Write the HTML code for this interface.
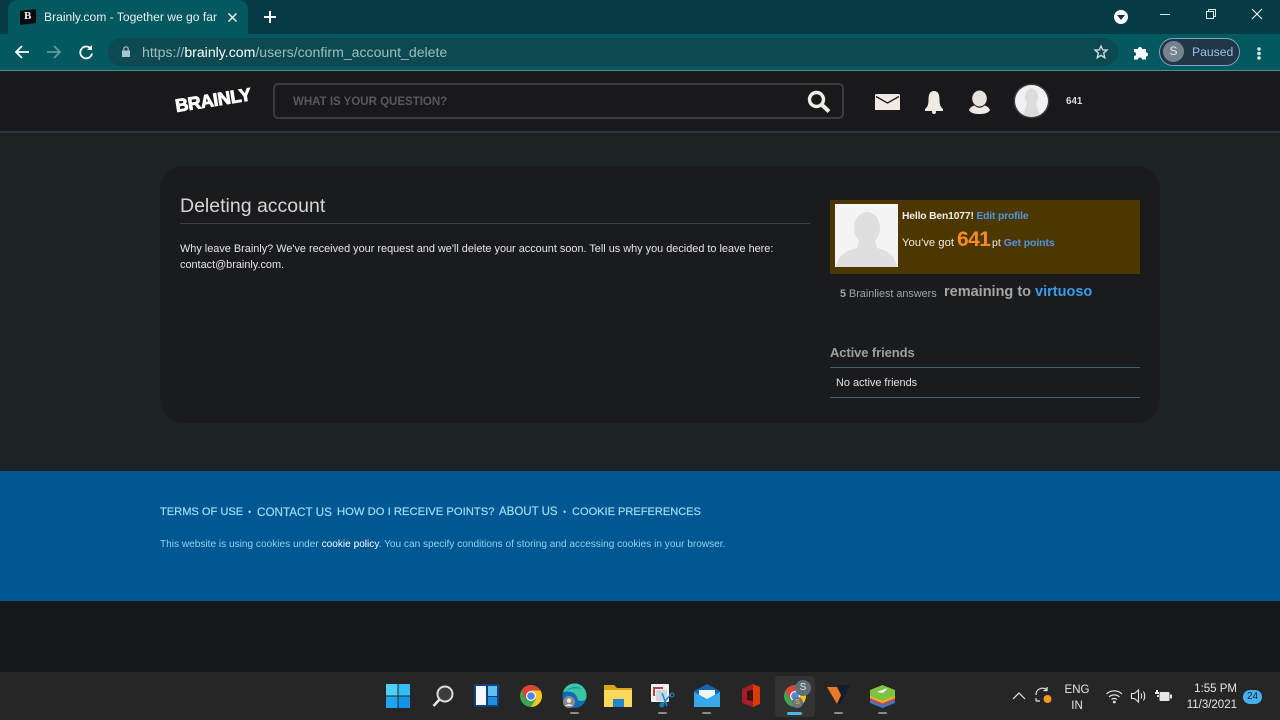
<!DOCTYPE html>
<html><head><meta charset="utf-8"><style>
html,body{margin:0;padding:0;width:1280px;height:720px;overflow:hidden;background:#1a1b1d;font-family:"Liberation Sans",sans-serif}
.a{position:absolute;white-space:nowrap}
svg{position:absolute;overflow:visible}
a{color:inherit;text-decoration:none}
.f{-webkit-text-stroke:.2px #9fdcf5}
</style></head><body>
<!-- title bar -->
<div class="a" style="left:0;top:0;width:1280px;height:34px;background:#053b44"></div>
<div class="a" style="left:0;top:34px;width:1280px;height:36px;background:#04585f"></div>
<div class="a" style="left:0;top:70px;width:1280px;height:1px;background:#4f8f94"></div>
<div class="a" style="left:8px;top:0;width:240px;height:34px;background:#04585f;border-radius:9px 9px 0 0"></div>
<div class="a" style="left:20px;top:10px;width:16px;height:14px;background:#0b0b0b;transform:skewY(-6deg)"></div>
<div class="a" style="left:24px;top:10px;font:bold 11px/13px 'Liberation Serif',serif;color:#eee">B</div>
<div class="a" style="left:44px;top:9px;font-size:12.1px;line-height:16px;color:#e8f0f0">Brainly.com - Together we go far</div>
<svg style="left:228px;top:13px" width="9" height="9" fill="none" stroke="#e8f0f0" stroke-width="1.500"><path d="M.5 .5L8.500 8.500M8.500 .5L.5 8.500"/></svg>
<svg style="left:264px;top:11px" width="12" height="12" fill="none" stroke="#fff" stroke-width="2"><path d="M6 0V12M0 6H12"/></svg>
<div class="a" style="left:1114px;top:10px;width:14px;height:14px;background:#fff;border-radius:50%"></div>
<svg style="left:1117px;top:15px" width="8" height="5"><path d="M0 0H8L4 5Z" fill="#053b44"/></svg>
<svg style="left:1160px;top:14px" width="10" height="1"><path d="M0 .5H10" stroke="#dfe9ea"/></svg>
<svg style="left:1206px;top:9px" width="10" height="10" fill="none" stroke="#dfe9ea"><path d="M.5 2.500H7.500V9.500H.5ZM2.500 2.500V.5H9.500V7.500H7.500"/></svg>
<svg style="left:1252px;top:9px" width="10" height="10" fill="none" stroke="#eef4f4" stroke-width="1.100"><path d="M0 0L10 10M10 0L0 10"/></svg>
<!-- toolbar -->
<svg style="left:15px;top:45px" width="14" height="14" fill="none" stroke="#fff" stroke-width="1.800"><path d="M14 7H1M7 1L1 7L7 13"/></svg>
<svg style="left:47px;top:45px" width="14" height="14" fill="none" stroke="#5f9a9d" stroke-width="1.800"><path d="M0 7H13M7 1L13 7L7 13"/></svg>
<svg style="left:79px;top:45px" width="14" height="14" fill="none" stroke="#fff" stroke-width="1.800"><path d="M12 4A5.900 5.900 0 1 0 13 8.500"/><path d="M13 0V5H8" fill="#fff" stroke="none"/></svg>
<div class="a" style="left:108px;top:38px;width:1010px;height:28px;background:#0d4950;border-radius:14px"></div>
<svg style="left:122px;top:46px" width="8" height="11"><path d="M0 4.500H8V11H0Z" fill="#a9c4c7"/><path d="M1.800 4.500V3A2.200 2.200 0 0 1 6.200 3V4.500" fill="none" stroke="#a9c4c7" stroke-width="1.200"/></svg>
<div class="a" style="left:142px;top:44px;font-size:14.100px;line-height:16px;color:#9dbdc0">https://<span style="color:#fff">brainly.com</span>/users/confirm_account_delete</div>
<svg style="left:1094px;top:45px" width="14" height="14" fill="none" stroke="#d5e2e3" stroke-width="1.300"><path d="M7 1L8.800 5H13L9.700 8L10.800 12.800L7 10.300L3.200 12.800L4.300 8L1 5H5.200Z"/></svg>
<svg style="left:1133px;top:45px" width="15" height="15" fill="#fff"><path d="M1 4H5A2 2 0 0 1 9 4H13V7.500A2 2 0 0 1 13 11.500V14.500H9A2 2 0 0 0 5 14.500H1V11A2 2 0 0 0 1 7Z"/></svg>
<div class="a" style="left:1159px;top:38px;width:79px;height:26px;background:#1f3747;border:1px solid #7fa4c4;border-radius:14px"></div>
<div class="a" style="left:1163px;top:41px;width:21px;height:21px;background:#76838d;border-radius:50%;color:#e4e9ec;font-size:12px;line-height:21px;text-align:center">S</div>
<div class="a" style="left:1192px;top:44.500px;font-size:12.200px;line-height:15px;color:#9fbfe6">Paused</div>
<div class="a" style="left:1257px;top:47px;width:4px;height:4px;background:#d8e8e8;border-radius:50%;box-shadow:0 5px 0 #d8e8e8,0 10px 0 #d8e8e8;transform:scale(.9)"></div>
<!-- site header -->
<div class="a" style="left:0;top:71px;width:1280px;height:60px;background:#19191b"></div>
<div class="a" style="left:0;top:131px;width:1280px;height:340px;background:#1d2225;border-top:2px solid #2a3640;box-sizing:border-box"></div>
<div class="a" style="left:177px;top:96px;font:bold 18px/20px 'Liberation Sans',sans-serif;color:#fff;transform:rotate(-9deg);transform-origin:0 100%;-webkit-text-stroke:.9px #fff;letter-spacing:-.3px">BRAINLY</div>
<div class="a" style="left:273px;top:83px;width:571px;height:36px;box-sizing:border-box;border:2px solid #3b3c3e;border-radius:5px"></div>
<div class="a" style="left:293px;top:94.500px;font-size:11.500px;line-height:15px;font-weight:bold;color:#58595b">WHAT IS YOUR QUESTION?</div>
<svg style="left:807px;top:90px" width="24" height="23" fill="none" stroke="#f0ede6"><circle cx="9.500" cy="9.500" r="7" stroke-width="3.400"/><path d="M14.500 14.500L22 21.500" stroke-width="4"/></svg>
<svg style="left:875px;top:94px" width="25" height="16"><path d="M0 1.500Q0 0 1.500 0H23.500Q25 0 25 1.500V16H0Z" fill="#efebe3"/><path d="M1 2.500L12.500 9L24 2.500" fill="none" stroke="#19191b" stroke-width="1.300"/></svg>
<svg style="left:925px;top:91px" width="18" height="23" fill="#efebe3"><path d="M9 0C13.500 0 14.500 4 14.500 9C14.500 14 16 16.500 18 18V20H0V18C2 16.500 3.500 14 3.500 9C3.500 4 4.500 0 9 0Z"/><circle cx="9" cy="21" r="2"/></svg>
<svg style="left:969px;top:91px" width="21" height="23"><ellipse cx="10.500" cy="7.500" rx="7.300" ry="8" fill="#e6e3dc"/><path d="M5.500 14.500Q1.500 15.500 0 19Q2 23 10.500 23Q19 23 21 19Q19.500 15.500 15.500 14.500Q10.500 19 5.500 14.500Z" fill="#efebe3"/></svg>
<div class="a" style="left:1015px;top:85px;width:33px;height:32px;background:#f1f1f1;border-radius:50%;box-shadow:0 0 0 1.500px #3b3b3b;overflow:hidden"><svg style="left:0;top:0" width="33" height="32" fill="#dcdcdc"><ellipse cx="16.500" cy="12" rx="6.500" ry="8.500"/><path d="M12 18H21L25 32H8Z"/></svg></div>
<div class="a" style="left:1066px;top:95.500px;font-size:9.800px;line-height:12px;font-weight:bold;color:#ddd">641</div>
<!-- main card -->
<div class="a" style="left:160px;top:166px;width:1000px;height:257px;background:#191b1e;border-radius:24px"></div>
<div class="a" style="left:180px;top:194.500px;font-size:19.500px;line-height:23px;color:#d8d5cf">Deleting account</div>
<div class="a" style="left:180px;top:223px;width:630px;height:1px;background:#3d3e40"></div>
<div class="a" style="left:180px;top:241px;font-size:10.900px;line-height:16px;color:#e8e6e0">Why leave Brainly? We've received your request and we'll delete your account soon. Tell us why you decided to leave here:<br>contact@brainly.com.</div>
<!-- profile -->
<div class="a" style="left:830px;top:200px;width:310px;height:74px;background:#4d3700"></div>
<div class="a" style="left:835px;top:204px;width:63px;height:63px;background:#f4f4f4;overflow:hidden"><svg style="left:0;top:0" width="63" height="63" fill="#dfdfdf"><ellipse cx="32" cy="24" rx="13" ry="16"/><path d="M24 36H40L42 44Q60 48 62 63H1Q3 48 22 44Z"/></svg></div>
<div class="a" style="left:902px;top:209.500px;font-size:10.300px;line-height:13px;font-weight:bold;color:#f0eee6;letter-spacing:-.15px">Hello Ben1077! <span style="color:#4e97e0">Edit profile</span></div>
<div class="a" style="left:902px;top:237px;font-size:11.300px;line-height:13px;color:#efece4">You've got</div>
<div class="a" style="left:957px;top:227.500px;font-size:21px;line-height:24px;font-weight:bold;color:#f58a28;letter-spacing:-.6px">641</div>
<div class="a" style="left:992px;top:237px;font-size:10.500px;line-height:13px;color:#efece4">pt <b style="color:#4e97e0;letter-spacing:-.1px">Get points</b></div>
<div class="a" style="left:840px;top:288px;font-size:10.800px;line-height:13px;color:#a5a5a3"><b>5</b> Brainliest answers</div>
<div class="a" style="left:944px;top:282.500px;font-size:14.500px;line-height:18px;font-weight:bold;color:#a5a5a3">remaining to <span style="color:#3c9be8">virtuoso</span></div>
<div class="a" style="left:830px;top:345px;font-size:13px;line-height:15px;font-weight:bold;color:#a09f9c;letter-spacing:-.1px">Active friends</div>
<div class="a" style="left:830px;top:367px;width:310px;height:1px;background:#3a6570"></div>
<div class="a" style="left:836px;top:376.500px;font-size:10.900px;line-height:13px;color:#e6e4de">No active friends</div>
<div class="a" style="left:830px;top:397px;width:310px;height:1px;background:#3a6570"></div>
<!-- footer -->
<div class="a" style="left:0;top:471px;width:1280px;height:130px;background:#005792"></div>
<div class="a" style="left:0;top:601px;width:1280px;height:71px;background:#17181a"></div>
<div class="a f" style="left:160px;top:505px;font-size:11.100px;line-height:15px;color:#9fdcf5">TERMS OF USE</div>
<div class="a" style="left:248px;top:505px;font-size:9px;line-height:15px;color:#9fdcf5">•</div>
<div class="a f" style="left:257px;top:505px;font-size:11.700px;line-height:15px;color:#9fdcf5">CONTACT US</div>
<div class="a f" style="left:337px;top:505px;font-size:11.250px;line-height:15px;color:#9fdcf5">HOW DO I RECEIVE POINTS?</div>
<div class="a f" style="left:499px;top:505px;font-size:11.500px;line-height:15px;color:#9fdcf5">ABOUT US</div>
<div class="a" style="left:563px;top:505px;font-size:9px;line-height:15px;color:#9fdcf5">•</div>
<div class="a f" style="left:572px;top:505px;font-size:11.050px;line-height:15px;color:#9fdcf5">COOKIE PREFERENCES</div>
<div class="a" style="left:160px;top:537.500px;font-size:10.100px;line-height:13px;color:#8fd3f0">This website is using cookies under <span style="color:#fff">cookie policy</span>. You can specify conditions of storing and accessing cookies in your browser.</div>
<!-- taskbar -->
<div class="a" style="left:0;top:672px;width:1280px;height:48px;background:#262626"></div>
<svg style="left:386px;top:684px" width="24" height="24"><path d="M0 0H11.500V11.500H0Z" fill="#4fd0f8"/><path d="M12.500 0H24V11.500H12.500Z" fill="#35bdf5"/><path d="M0 12.500H11.500V24H0Z" fill="#20a6ee"/><path d="M12.500 12.500H24V24H12.500Z" fill="#1494e6"/></svg>
<svg style="left:432px;top:685px" width="22" height="22" fill="none"><circle cx="13" cy="9" r="7.500" fill="#3c3c3c" stroke="#dcdcdc" stroke-width="2"/><path d="M7.500 14.500L1.500 21" stroke="#e8e8e8" stroke-width="2.500"/></svg>
<svg style="left:474px;top:684px" width="25" height="23"><rect width="25" height="23" fill="#123f7d"/><rect x="2" y="2" width="10" height="19" fill="#f4f8fc"/><rect x="14" y="2" width="9" height="10" fill="#5cc0f0"/><rect x="14" y="13" width="9" height="8" fill="#1f8fdc"/></svg>
<svg style="left:520px;top:685px" width="22" height="22"><circle cx="11" cy="11" r="11" fill="#3ba650"/><path d="M1.500 5.500A11 11 0 0 1 20.500 5.500H11L6 15Z" fill="#dc4437"/><path d="M20.500 5.500A11 11 0 0 1 11 22L16 14L11 5.500Z" fill="#f5c518"/><circle cx="11" cy="11" r="5" fill="#fff"/><circle cx="11" cy="11" r="3.800" fill="#4a86e8"/></svg>
<svg style="left:562px;top:684px" width="25" height="25"><circle cx="12.500" cy="12" r="12" fill="#1568b8"/><path d="M1 8A12 12 0 0 1 24.500 12Q24.500 17 19 17Q15 17 15 13Q12 6 1 8Z" fill="#38c8a0"/><path d="M4 7Q11 0 20 5Q11 3 4 7Z" fill="#1a8ed8"/><circle cx="7" cy="18" r="6" fill="#8a8884"/><circle cx="7" cy="16.500" r="2.300" fill="#e8e4e0"/><path d="M3 22Q7 18 11 22Z" fill="#e8e4e0"/></svg>
<svg style="left:604px;top:685px" width="28" height="22"><path d="M0 0H10L13 3H28V22H0Z" fill="#d9a520"/><rect y="5" width="28" height="17" fill="#fbd75a"/><rect x="9" y="14" width="11" height="8" fill="#1f86d0"/></svg>
<svg style="left:648px;top:684px" width="26" height="24"><rect x="3" width="18" height="18" rx="1" fill="#f0f0f0"/><path d="M5 3H15V5H7V12H5Z" fill="#b8473c"/><rect x="8" y="6" width="11" height="11" fill="#ccd5de"/><path d="M13 22L23 10M19 22L14 9" stroke="#1a8cd8" stroke-width="1.500"/><circle cx="24" cy="11" r="2" fill="none" stroke="#1a8cd8"/><circle cx="14" cy="21" r="2" fill="none" stroke="#1a8cd8"/></svg>
<svg style="left:694px;top:684px" width="26" height="23"><path d="M13 0L26 7V23H0V7Z" fill="#1266b0"/><path d="M5 6H21V13L13 17L5 13Z" fill="#f0f6fb"/><path d="M0 8L13 15L26 8V23H0Z" fill="#35a7ea"/></svg>
<svg style="left:742px;top:684px" width="18" height="23"><path d="M11 0L18 3V20L11 23L0 19V5Z" fill="#d83b01"/><path d="M0 5L11 0V23L0 19Z" fill="#a61c28"/><path d="M5 7L11 6V17L5 16Z" fill="#3d1210"/></svg>
<div class="a" style="left:775px;top:676px;width:40px;height:41px;background:#333;border-radius:4px"></div>
<svg style="left:784px;top:685px" width="22" height="22"><circle cx="11" cy="11" r="11" fill="#3ba650"/><path d="M1.500 5.500A11 11 0 0 1 20.500 5.500H11L6 15Z" fill="#dc4437"/><path d="M20.500 5.500A11 11 0 0 1 11 22L16 14L11 5.500Z" fill="#f5c518"/><circle cx="11" cy="11" r="5" fill="#fff"/><circle cx="11" cy="11" r="3.800" fill="#4a86e8"/></svg>
<div class="a" style="left:795px;top:680px;width:16px;height:16px;background:#5f6d76;border-radius:50%;color:#dfe6ea;font-size:10px;line-height:16px;text-align:center">S</div>
<div class="a" style="left:792px;top:697px;width:11px;height:11px;background:#6f7478;border-radius:50%;color:#e8c060;font-size:7px;line-height:11px;text-align:center">S</div>
<div class="a" style="left:787px;top:712px;width:15px;height:3px;background:#4fb4e8;border-radius:2px"></div>
<svg style="left:827px;top:685px" width="23" height="19"><path d="M0 2H10L14 10L10 19Z" fill="#e8792a"/><path d="M10 0H23L13 19H10L15 10Z" fill="#151a30"/></svg>
<svg style="left:870px;top:685px" width="25" height="23"><path d="M0 15L12.500 20L25 15V18L12.500 23L0 18Z" fill="#3a78c8"/><path d="M0 12L12.500 17L25 12V15L12.500 20L0 15Z" fill="#d84a3c"/><path d="M0 9L12.500 14L25 9V13L12.500 18L0 13Z" fill="#e8b52c"/><path d="M12.500 0L25 5V11L12.500 16L0 11V5Z" fill="#7fc242"/><path d="M7 7L18 3L13 8Z" fill="#fff"/></svg>
<div class="a" style="left:570px;top:712px;width:9px;height:2px;background:#8a8a8a;border-radius:1px;box-shadow:88px 0 0 #8a8a8a,132px 0 0 #8a8a8a,264px 0 0 #8a8a8a,308px 0 0 #8a8a8a"></div>
<!-- tray -->
<svg style="left:1013px;top:692px" width="12" height="8" fill="none" stroke="#e6e6e6" stroke-width="1.200"><path d="M0 7L6 1L12 7"/></svg>
<svg style="left:1035px;top:687px" width="18" height="18" fill="none" stroke="#e6e6e6" stroke-width="1.200"><path d="M1 8A6.500 6.500 0 0 1 12 3M12 0V3.500H8.500M1 14H5M1 14V11"/><circle cx="12.500" cy="12" r="4" fill="#f39a1e" stroke="none"/></svg>
<div class="a" style="left:1062px;top:681.500px;width:30px;text-align:center;font-size:11.500px;line-height:16.500px;color:#e6e6e6">ENG<br>IN</div>
<svg style="left:1106px;top:689px" width="17" height="14" fill="none" stroke="#e6e6e6" stroke-width="1.200"><path d="M.5 5A11 11 0 0 1 16 5M3 8A7.500 7.500 0 0 1 13.500 8M5.500 10.500A4 4 0 0 1 11 10.500"/><circle cx="8.300" cy="13" r=".8" fill="#e6e6e6"/></svg>
<svg style="left:1131px;top:689px" width="16" height="14" fill="none" stroke="#e6e6e6" stroke-width="1.100"><path d="M.5 4.500H3.500L7.500 1V13L3.500 9.500H.5ZM10 4.500Q11.500 7 10 9.500M12.500 2.500Q15 7 12.500 11.500"/></svg>
<svg style="left:1155px;top:689px" width="17" height="14" fill="#e6e6e6"><path d="M1 1V3H0V5H4V3H3V1Z"/><rect x="2" y="6" width="2" height="2"/><rect x="4.500" y="3" width="10" height="9" rx="1"/><rect x="15" y="5.500" width="2" height="4"/></svg>
<div class="a" style="right:43px;top:680.500px;text-align:right;font-size:11.500px;line-height:16.500px;color:#e6e6e6">1:55 PM<br>11/3/2021</div>
<div class="a" style="left:1243px;top:690px;width:19px;height:14px;border-radius:7px;background:#45b0ea;color:#10293a;font-size:10px;line-height:14px;text-align:center">24</div>
</body></html>
